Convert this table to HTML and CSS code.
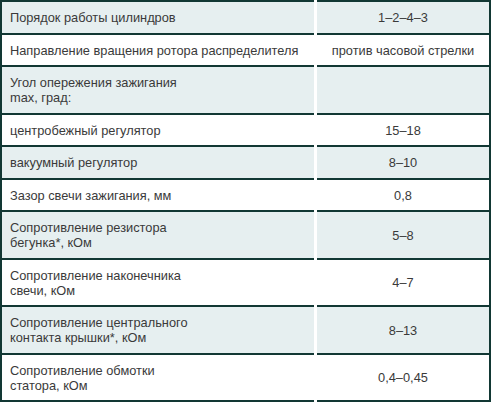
FILE: index.html
```html
<!DOCTYPE html>
<html lang="ru">
<head>
<meta charset="utf-8">
<link rel="stylesheet" href="styles.css">
</head>
<body>
<div class="spec">
  <div class="row shade first"><div class="name">Порядок работы цилиндров</div><div class="val">1–2–4–3</div></div>
  <div class="row"><div class="name">Направление вращения ротора распределителя</div><div class="val">против часовой стрелки</div></div>
  <div class="row shade"><div class="name">Угол опережения зажигания<br>max, град:</div><div class="val"></div></div>
  <div class="row"><div class="name">центробежный регулятор</div><div class="val">15–18</div></div>
  <div class="row shade"><div class="name">вакуумный регулятор</div><div class="val">8–10</div></div>
  <div class="row"><div class="name">Зазор свечи зажигания, мм</div><div class="val">0,8</div></div>
  <div class="row shade"><div class="name">Сопротивление резистора<br>бегунка*, кОм</div><div class="val">5–8</div></div>
  <div class="row"><div class="name">Сопротивление наконечника<br>свечи, кОм</div><div class="val">4–7</div></div>
  <div class="row shade"><div class="name">Сопротивление центрального<br>контакта крышки*, кОм</div><div class="val">8–13</div></div>
  <div class="row"><div class="name">Сопротивление обмотки<br>статора, кОм</div><div class="val">0,4–0,45</div></div>
</div>
</body>
</html>
```

FILE: styles.css
```css
html, body {
  margin: 0;
  padding: 0;
  background: #fff;
}
body {
  font-family: "Liberation Sans", Arial, sans-serif;
  font-size: 12.8px;
  line-height: 15px;
  color: #3a3a3a;
}
.spec {
  width: 491px;
}
.row {
  display: grid;
  grid-template-columns: 314px 174px;
  column-gap: 3px;
}
.row > div {
  box-sizing: border-box;
  padding: 8px 8px 7.5px;
  border-bottom: 2px solid #123834;
  display: flex;
  align-items: center;
}
.row.first > div {
  border-top: 2px solid #123834;
}
.row.shade > div {
  background: #e6eff0;
}
.name {
  border-left: 2px solid #123834;
}
.val {
  border-right: 2px solid #123834;
  justify-content: center;
  text-align: center;
}
```
